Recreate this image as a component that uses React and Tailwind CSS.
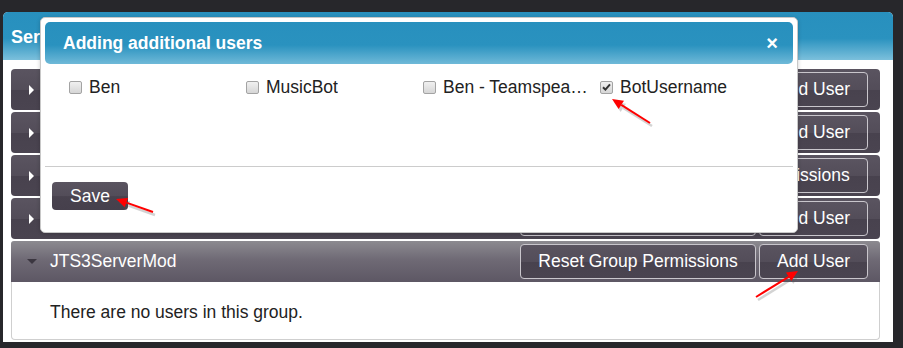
import React from 'react';

const rowBg = 'bg-[linear-gradient(to_bottom,#5a5460_0%,#534d59_50%,#48424e_52%,#4a4450_100%)]';
const btn = `h-[35px] rounded-[4px] border border-[#c9c6cc] text-white text-[17.5px] leading-none flex items-center justify-center ${rowBg}`;

const Row = ({ buttons }) => (
    <div className={`h-[41px] mb-[2px] rounded-[4px] flex items-center ${rowBg}`}>
        <span className="ml-[18px] w-0 h-0 border-y-[5px] border-y-transparent border-l-[5px] border-l-white"></span>
        <div className="ml-auto mr-[12px] flex gap-[3px]">
            {buttons.map((b) => (
                <div key={b.label} className={`${btn} ${b.w}`}>{b.label}</div>
            ))}
        </div>
    </div>
);

const Check = ({ label, checked }) => (
    <div className="w-[177px] h-[22px] flex items-center">
        <span className="w-[13px] h-[13px] rounded-[2px] border border-[#a3a3a3] bg-[linear-gradient(to_bottom,#f0f0f0,#d6d6d6)] flex items-center justify-center shrink-0">
            {checked && (
                <svg width="9" height="8" viewBox="0 0 9 8">
                    <path d="M1 4.2 L3.4 6.6 L8 1.4" fill="none" stroke="#333" strokeWidth="2" />
                </svg>
            )}
        </span>
        <span className="ml-[7px] text-[17.5px] text-[#222] truncate max-w-[146px]">{label}</span>
    </div>
);

const Arrow = ({ x1, y1, x2, y2 }) => {
    const a = Math.atan2(y2 - y1, x2 - x1);
    const L = 11, W = 5;
    const bx = x2 - L * Math.cos(a), by = y2 - L * Math.sin(a);
    const p = `${x2},${y2} ${bx + W * Math.sin(a)},${by - W * Math.cos(a)} ${bx - W * Math.sin(a)},${by + W * Math.cos(a)}`;
    return (
        <g>
            <g transform="translate(2,3)" opacity="0.25">
                <line x1={x1} y1={y1} x2={bx} y2={by} stroke="#555" strokeWidth="2.5" />
                <polygon points={p} fill="#555" />
            </g>
            <line x1={x1} y1={y1} x2={bx} y2={by} stroke="#f00" strokeWidth="2" />
            <polygon points={p} fill="#f00" />
        </g>
    );
};

export default function App() {
    return (
        <div className="relative w-[903px] h-[348px] overflow-hidden bg-[#27272b] pt-[12px] pl-[3px] pr-[10px] font-['Liberation_Sans',Arial,sans-serif]">
            <div className="w-[890px] h-[330px] bg-white rounded-t-[5px] flex flex-col">
                <div className="h-[48px] rounded-t-[5px] bg-[linear-gradient(to_bottom,#2890be_0%,#2a92bf_55%,#7cc0dc_100%)] pl-[8px] pt-[12px] text-white font-bold text-[18px]">
                    Server Groups
                </div>
                <div className="pl-[8px] pr-[13px] pt-[9px]">
                    <Row buttons={[{ label: 'Reset Group Permissions', w: 'w-[236px]' }, { label: 'Add User', w: 'w-[109px]' }]} />
                    <Row buttons={[{ label: 'Reset Group Permissions', w: 'w-[236px]' }, { label: 'Add User', w: 'w-[109px]' }]} />
                    <Row buttons={[{ label: 'Reset Group Permissions', w: 'w-[236px]' }]} />
                    <Row buttons={[{ label: 'Reset Group Permissions', w: 'w-[236px]' }, { label: 'Add User', w: 'w-[109px]' }]} />
                    <div className="rounded-[4px] border border-[#cfcfcf] border-t-0">
                        <div className="h-[41px] rounded-t-[3px] flex items-center bg-[linear-gradient(to_bottom,#8c8a90_0%,#6f6a75_45%,#5d5764_100%)] -mx-px">
                            <span className="ml-[16px] w-0 h-0 border-x-[5px] border-x-transparent border-t-[5px] border-t-[#3b3640]"></span>
                            <span className="ml-[13px] text-white text-[17.5px]">JTS3ServerMod</span>
                            <div className="ml-auto mr-[12px] flex gap-[3px]">
                                <div className={`${btn} w-[236px]`}>Reset Group Permissions</div>
                                <div className={`${btn} w-[109px]`}>Add User</div>
                            </div>
                        </div>
                        <div className="h-[57px] pl-[38px] pt-[17px] text-[17.5px] text-[#222]">
                            There are no users in this group.
                        </div>
                    </div>
                </div>
            </div>

            <div className="absolute left-[40px] top-[17px] w-[758px] h-[216px] bg-white border border-[#c8c8c8] rounded-[5px] p-[4px] shadow-[0_1px_4px_rgba(0,0,0,0.2)]">
                <div className="h-[42px] rounded-[5px] bg-[linear-gradient(to_bottom,#2890be_0%,#2a92bf_55%,#6fb9d8_100%)] flex items-center pl-[18px] pr-[15px]">
                    <span className="text-white font-bold text-[17.5px]">Adding additional users</span>
                    <span className="ml-auto text-white font-bold text-[20px] leading-none">×</span>
                </div>
                <div className="flex items-start pl-[24px] pt-[12px] h-[102px]">
                    <Check label="Ben" />
                    <Check label="MusicBot" />
                    <Check label="Ben - Teamspeak Bot" />
                    <Check label="BotUsername" checked />
                </div>
                <div className="border-t border-[#cccccc]"></div>
                <div className="pl-[7px] pt-[15px]">
                    <div className="w-[76px] h-[28px] rounded-[4px] flex items-center justify-center text-white text-[17.5px] bg-[linear-gradient(to_bottom,#5a5460_0%,#534d59_50%,#48424e_52%,#46404c_100%)]">
                        Save
                    </div>
                </div>
            </div>

            <svg className="absolute left-0 top-0 pointer-events-none" width="903" height="348">
                <Arrow x1={650} y1={123} x2={612} y2={99} />
                <Arrow x1={153} y1={212} x2={116} y2={199} />
                <Arrow x1={756} y1={297} x2={798} y2={271} />
            </svg>
        </div>
    );
}
